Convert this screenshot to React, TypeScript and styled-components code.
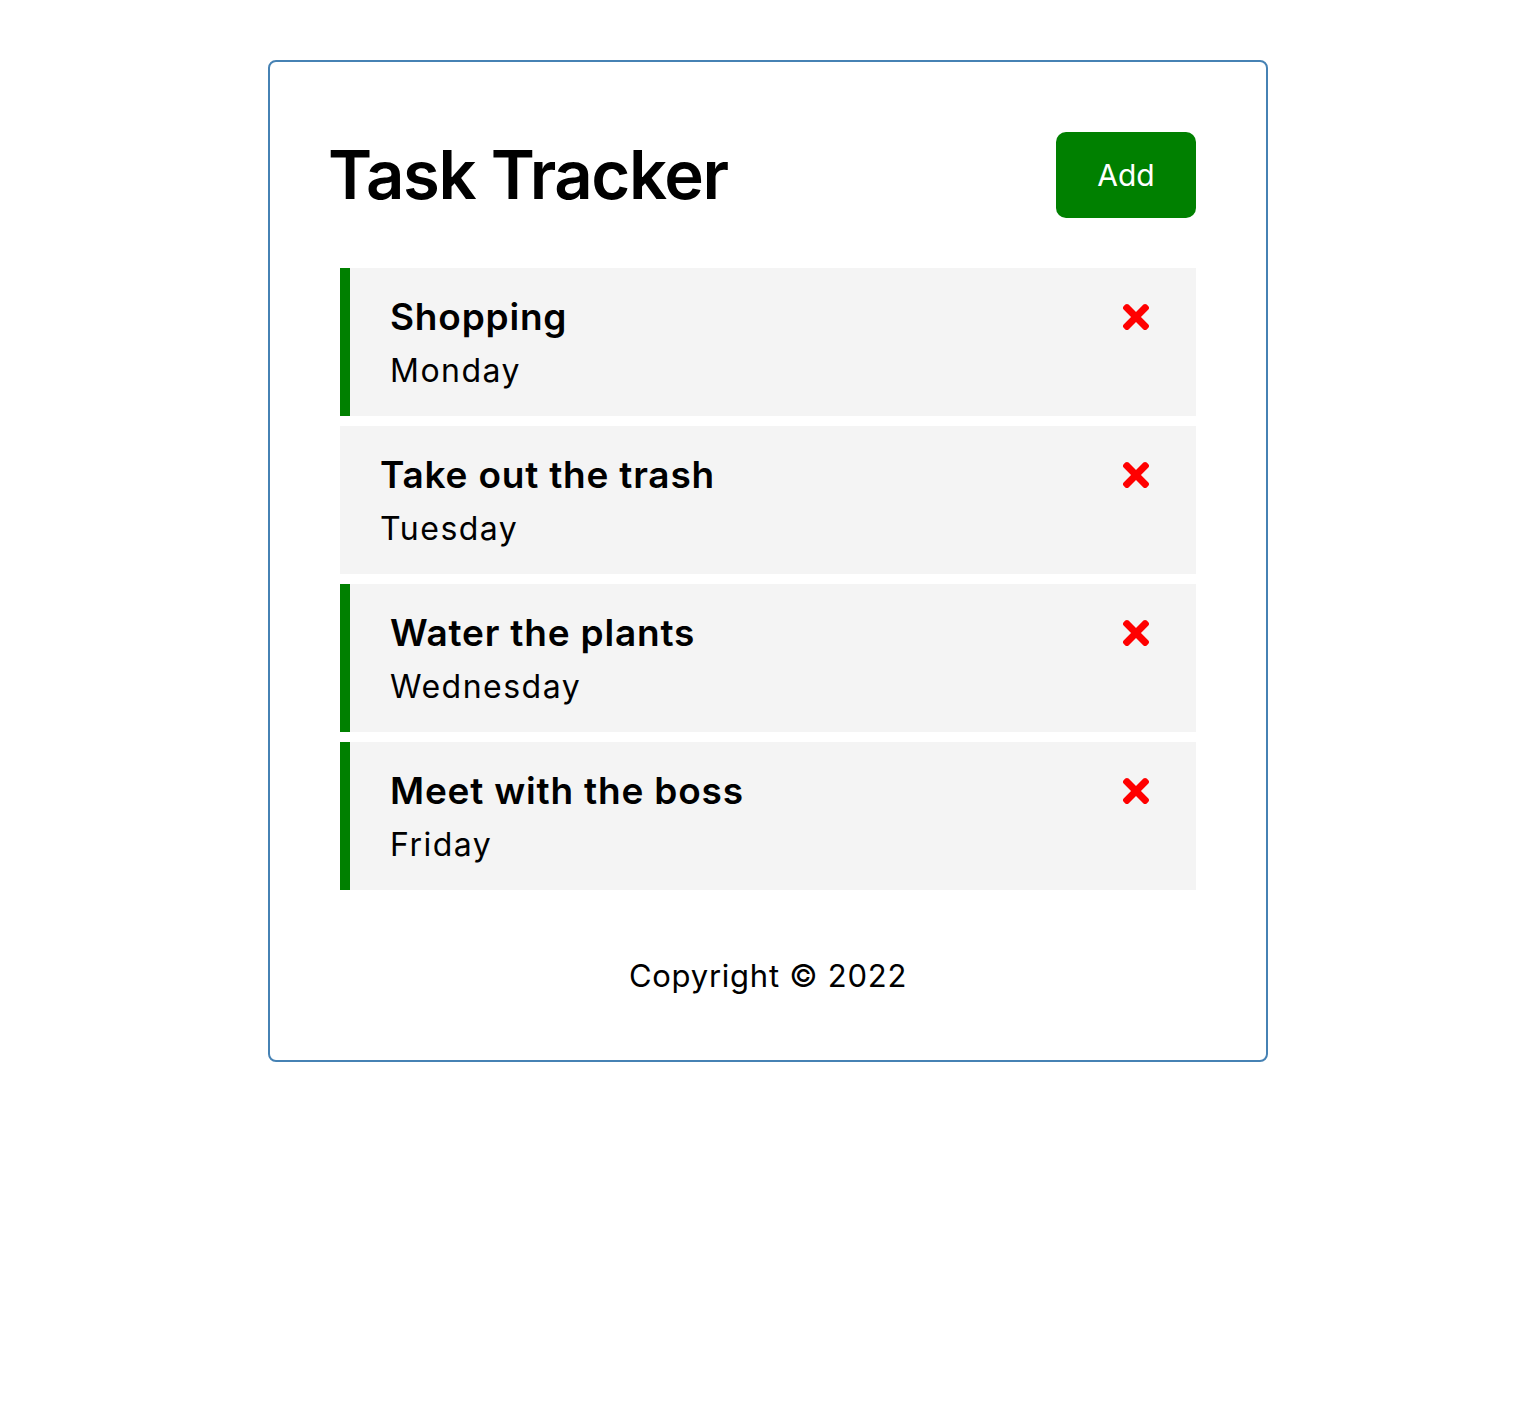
import React from "react";
import styled, { createGlobalStyle } from "styled-components";
import { FaTimes } from "react-icons/fa";

const tasks = [
  { id: 1, text: "Shopping", day: "Monday", reminder: true },
  { id: 2, text: "Take out the trash", day: "Tuesday", reminder: false },
  { id: 3, text: "Water the plants", day: "Wednesday", reminder: true },
  { id: 4, text: "Meet with the boss", day: "Friday", reminder: true },
];

const App = () => {
  return (
    <>
      <GlobalStyle />
      <Container>
        <Header>
          <Title>Task Tracker</Title>
          <Button>Add</Button>
        </Header>
        {tasks.map((task) => (
          <Task key={task.id} reminder={task.reminder}>
            <TaskTitle>
              {task.text}
              <FaTimes color="red" size={38} />
            </TaskTitle>
            <Day>{task.day}</Day>
          </Task>
        ))}
        <Footer>Copyright &copy; 2022</Footer>
      </Container>
    </>
  );
};

export default App;

const GlobalStyle = createGlobalStyle`
  * {
    box-sizing: border-box;
    margin: 0;
    padding: 0;
  }
  body {
    font-family: Inter, "Open Sans", sans-serif;
    background: #fff;
    color: #000;
  }
`;

const Container = styled.div`
  width: 1000px;
  margin: 60px auto 0;
  border: 2px solid steelblue;
  border-radius: 8px;
  padding: 60px;
`;

const Header = styled.header`
  display: flex;
  justify-content: space-between;
  align-items: center;
  margin-bottom: 40px;
`;

const Title = styled.h1`
  font-size: 67px;
  font-weight: 600;
  line-height: 106px;
  letter-spacing: -1.4px;
  margin-left: -2px;
`;

const Button = styled.button`
  display: inline-block;
  background: green;
  color: #fff;
  border: none;
  width: 140px;
  height: 86px;
  margin: 10px;
  border-radius: 10px;
  font-family: inherit;
  font-size: 30px;
  cursor: pointer;
`;

const Task = styled.div<{ reminder?: boolean }>`
  background: #f4f4f4;
  margin: 10px;
  padding: 20px 40px;
  cursor: pointer;
  ${(props) => props.reminder && `border-left: 10px solid green;`}
`;

const TaskTitle = styled.h3`
  display: flex;
  align-items: center;
  justify-content: space-between;
  font-size: 37px;
  font-weight: 600;
  line-height: 58px;
  letter-spacing: 0.8px;

  svg {
    margin-right: 1px;
  }
`;

const Day = styled.p`
  font-size: 32px;
  line-height: 50px;
  letter-spacing: 1.5px;
`;

const Footer = styled.footer`
  margin-top: 61px;
  text-align: center;
  font-size: 31px;
  line-height: 49px;
  letter-spacing: 0.75px;
`;
